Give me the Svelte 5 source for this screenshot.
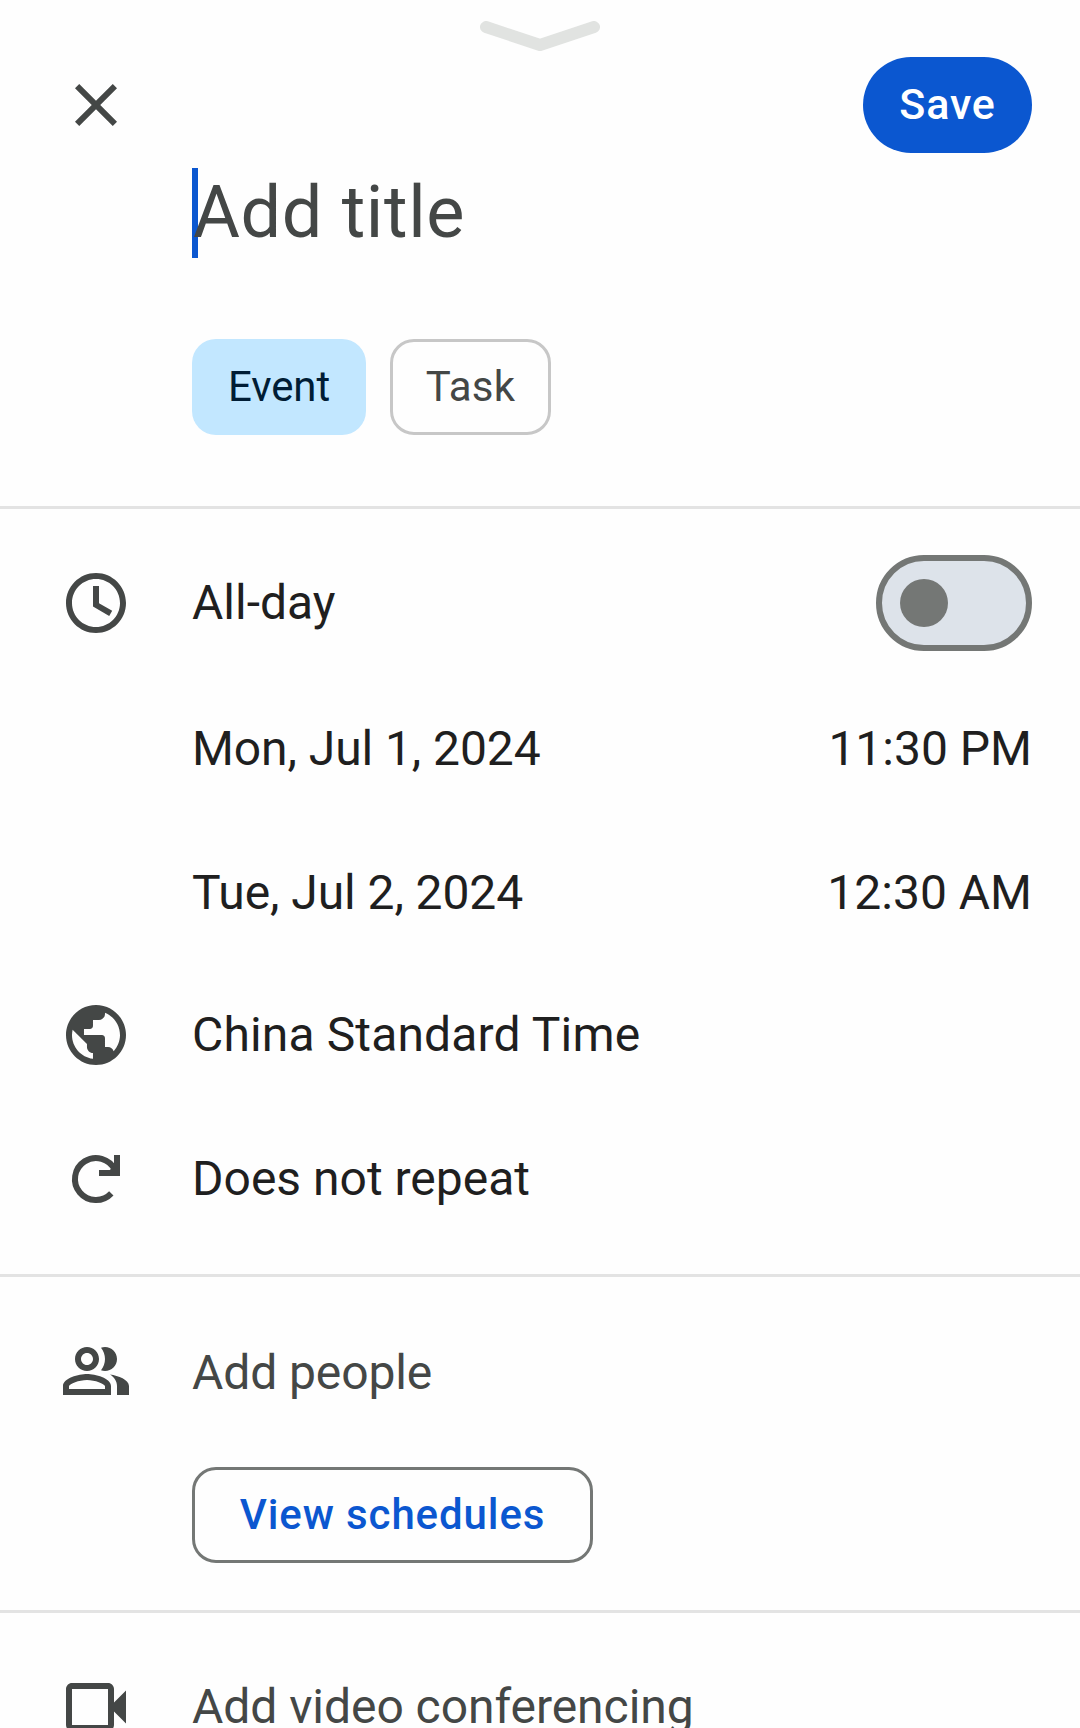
<script>
  const icons = {
    close: 'M19 6.41L17.59 5 12 10.59 6.41 5 5 6.41 10.59 12 5 17.59 6.41 19 12 13.41 17.59 19 19 17.59 13.41 12z',
    clock: 'M12 2C6.48 2 2 6.48 2 12s4.48 10 10 10 10-4.48 10-10S17.52 2 12 2zm0 18c-4.42 0-8-3.58-8-8s3.58-8 8-8 8 3.58 8 8-3.58 8-8 8zM13 6.3h-2v6.85l5.4 3.15 1-1.7-4.4-2.55z',
    globe: 'M12 2C6.48 2 2 6.48 2 12s4.48 10 10 10 10-4.48 10-10S17.52 2 12 2zM4 12c0-.61.08-1.21.21-1.78L8.99 15v1c0 1.1.9 2 2 2v1.93C7.06 19.43 4 16.07 4 12zm13.89 5.4c-.26-.81-1-1.4-1.9-1.4h-1v-3c0-.55-.45-1-1-1h-6v-2h2c.55 0 1-.45 1-1V7h2c1.1 0 2-.9 2-2v-.41C17.92 5.77 20 8.65 20 12c0 2.08-.81 3.98-2.11 5.4z',
    people: 'M16.67 13.13C18.04 14.06 19 15.32 19 17v3h4v-3c0-2.18-3.57-3.47-6.33-3.87zM15 12c2.21 0 4-1.79 4-4s-1.79-4-4-4c-.47 0-.91.1-1.33.24C14.5 5.27 15 6.58 15 8s-.5 2.73-1.33 3.76c.42.14.86.24 1.33.24zM9 12c2.21 0 4-1.79 4-4s-1.79-4-4-4-4 1.79-4 4 1.79 4 4 4zm0-6c1.1 0 2 .9 2 2s-.9 2-2 2-2-.9-2-2 .9-2 2-2zM9 13c-2.67 0-8 1.34-8 4v3h16v-3c0-2.66-5.33-4-8-4zm6 5H3v-.99C3.2 16.29 6.3 15 9 15s5.8 1.29 6 2v1z',
    video: 'M18 10.5V6c0-1.1-.9-2-2-2H4c-1.1 0-2 .9-2 2v12c0 1.1.9 2 2 2h12c1.1 0 2-.9 2-2v-4.5l4 4v-11l-4 4zM16 18H4V6h12v12z'
  };
</script>

{#snippet icon(name)}
  <svg class="icon" viewBox="0 0 24 24" aria-hidden="true"><path d={icons[name]} /></svg>
{/snippet}

<main class="sheet">
  <div class="handle">
    <svg width="120" height="30" viewBox="0 0 120 30" aria-hidden="true"><path d="M6 6 60 24 114 6" /></svg>
  </div>
  <header class="bar">
    {@render icon('close')}
    <button class="save"><span>Save</span></button>
  </header>
  <div class="title"><i class="caret"></i><span>Add title</span></div>
  <div class="chips">
    <button class="chip selected"><span>Event</span></button>
    <button class="chip"><span>Task</span></button>
  </div>

  <section class="when">
    <div class="row">
      {@render icon('clock')}
      <span class="t">All-day</span>
      <span class="switch" role="switch" aria-checked="false" aria-label="All-day"><i></i></span>
    </div>
    <div class="row indent"><span class="t date">Mon, Jul 1, 2024</span><span class="t">11:30 PM</span></div>
    <div class="row indent"><span class="t date">Tue, Jul 2, 2024</span><span class="t">12:30 AM</span></div>
    <div class="row">{@render icon('globe')}<span class="t zone">China Standard Time</span></div>
    <div class="row">
      <svg class="icon" viewBox="0 0 24 24" aria-hidden="true">
        <path class="line" d="M17.1 16.8A7 7 0 1 1 18.3 9" />
        <path d="M18 4h2v7h-7V9h3.6L18 7.6z" />
      </svg>
      <span class="t">Does not repeat</span>
    </div>
  </section>

  <section class="people">
    <div class="row muted">{@render icon('people')}<span class="t drop">Add people</span></div>
    <button class="schedules"><span>View schedules</span></button>
  </section>

  <section class="video">
    <div class="row muted">{@render icon('video')}<span class="t conf">Add video conferencing</span></div>
  </section>
</main>

<style>
  :global(body) { margin: 0; background: #fefefe; }
  .sheet {
    box-sizing: border-box;
    width: 1080px;
    height: 1728px;
    overflow: hidden;
    display: flex;
    flex-direction: column;
    font-family: Roboto, sans-serif;
    color: #1f1f1f;
    background: #fefefe;
  }
  .sheet > * { flex: none; }
  button { box-sizing: border-box; margin: 0; padding: 0 0 2px; border: 0; background: none; font-family: inherit; white-space: nowrap; }
  .handle { height: 57px; padding-top: 21px; box-sizing: border-box; display: flex; justify-content: center; }
  .handle path { fill: none; stroke: #e1e3e1; stroke-width: 12; stroke-linecap: round; stroke-linejoin: round; }
  .bar { height: 96px; padding: 0 48px 0 60px; display: flex; align-items: center; justify-content: space-between; }
  .icon { width: 72px; height: 72px; flex: none; fill: #444746; }
  .icon .line { fill: none; stroke: #444746; stroke-width: 2; }
  .save { width: 169px; height: 96px; border-radius: 48px; background: #0b57d0; color: #fff; font-size: 43px; font-weight: 500; letter-spacing: 0.9px; }
  .title { height: 90px; margin: 15px 0 0 192px; display: flex; align-items: center; font-size: 72px; line-height: 90px; color: #444746; letter-spacing: 0.65px; }
  .caret { width: 6px; height: 90px; margin-right: -5px; background: #0b57d0; }
  .chips { display: flex; gap: 24px; margin: 81px 0 71px 192px; }
  .chip { width: 161px; height: 96px; border: 3px solid #c7c7c7; border-radius: 24px; color: #444746; font-size: 42px; letter-spacing: 0.2px; }
  .chip.selected { width: 174px; border: 0; background: #c2e7ff; color: #001d35; letter-spacing: -0.1px; }
  section { border-top: 3px solid #e3e3e3; }
  .when { height: 768px; box-sizing: border-box; padding-top: 22px; }
  .row { height: 144px; padding: 0 48px 0 60px; display: flex; align-items: center; gap: 60px; }
  .row.indent { padding-left: 192px; justify-content: space-between; }
  .t { font-size: 48px; line-height: 56px; white-space: nowrap; }
  .indent .t, .drop { padding-top: 4px; }
  .date { letter-spacing: -0.08px; }
  .zone { letter-spacing: 0.14px; }
  .drop { letter-spacing: -0.1px; }
  .conf { letter-spacing: -0.05px; }
  .muted { color: #444746; }
  .switch { box-sizing: border-box; width: 156px; height: 96px; margin-left: auto; padding-left: 18px; display: flex; align-items: center; border: 6px solid #747775; border-radius: 48px; background: #dde3ea; }
  .switch i { width: 48px; height: 48px; border-radius: 50%; background: #747775; }
  .people { height: 336px; box-sizing: border-box; padding-top: 22px; }
  .schedules { display: block; width: 401px; height: 96px; margin: 24px 0 0 192px; border: 3px solid #747775; border-radius: 24px; color: #0b57d0; font-size: 42px; font-weight: 500; letter-spacing: 0.9px; }
  .video { padding-top: 22px; }
</style>
